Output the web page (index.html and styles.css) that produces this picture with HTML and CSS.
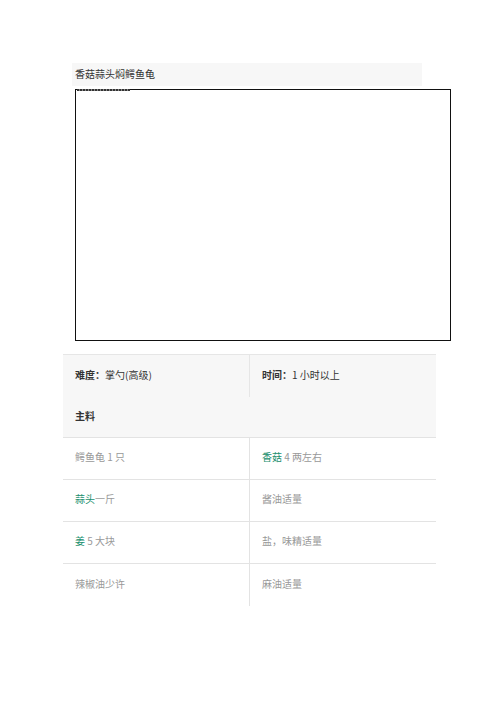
FILE: index.html
```html
<!DOCTYPE html>
<html lang="zh">
<head>
<meta charset="utf-8">
<link rel="stylesheet" href="styles.css">
</head>
<body>
<div class="page">
  <div class="title">香菇蒜头焖鳄鱼龟</div>
  <div class="photo"><span class="alt"></span></div>
  <div class="table">
    <div class="row head">
      <div class="cell"><b>难度：</b>掌勺(高级)</div>
      <div class="cell"><b>时间：</b>1 小时以上</div>
    </div>
    <div class="row sub">
      <div class="cell wide"><b>主料</b></div>
    </div>
    <div class="row item">
      <div class="cell">鳄鱼龟 1 只</div>
      <div class="cell"><span class="link">香菇</span> 4 两左右</div>
    </div>
    <div class="row item">
      <div class="cell"><span class="link">蒜头</span>一斤</div>
      <div class="cell">酱油适量</div>
    </div>
    <div class="row item">
      <div class="cell"><span class="link">姜</span> 5 大块</div>
      <div class="cell">盐，味精适量</div>
    </div>
    <div class="row item last">
      <div class="cell">辣椒油少许</div>
      <div class="cell">麻油适量</div>
    </div>
  </div>
</div>
</body>
</html>
```
FILE: styles.css
```css
html, body {
  margin: 0;
  padding: 0;
  background: #fff;
}
body {
  font-family: "Noto Sans CJK SC", "Liberation Sans", sans-serif;
  font-size: 10px;
  color: #333;
}
.page {
  padding-top: 63px;
}
.title {
  margin-left: 72px;
  width: 347px;
  height: 23px;
  line-height: 22px;
  padding-left: 3px;
  background: #f7f7f7;
  color: #333;
}
.photo {
  position: relative;
  margin: 3px 0 0 75px;
  width: 374px;
  height: 250px;
  border: 1px solid #111;
}
.alt {
  position: absolute;
  left: 1px;
  top: -1px;
  width: 53px;
  height: 2px;
  background: repeating-linear-gradient(90deg, #333 0 2px, #888 2px 3px);
}
.table {
  margin: 13px 0 0 63px;
  width: 373px;
  border-top: 1px solid #e6e6e6;
}
.row {
  display: flex;
}
.cell {
  width: 186px;
  box-sizing: border-box;
  padding: 0 0 3px 12px;
  line-height: 14px;
  display: flex;
  align-items: center;
  white-space: pre;
}
.cell + .cell {
  width: 187px;
  border-left: 1px solid #e3e3e3;
  padding-left: 12px;
}
.cell.wide {
  width: 373px;
}
.head {
  height: 42px;
  background: #f7f7f7;
}
.head .cell + .cell {
  border-left-color: #e6e6e6;
}
.sub {
  height: 40px;
  background: #f7f7f7;
  border-bottom: 1px solid #e3e3e3;
}
.item {
  height: 41px;
  border-bottom: 1px solid #e3e3e3;
  color: #999;
}
.item.last {
  border-bottom: none;
  height: 42px;
}
b {
  font-weight: bold;
  color: #333;
}
.head .cell, .sub .cell {
  color: #333;
}
.link {
  color: #1b8f6e;
}
```
